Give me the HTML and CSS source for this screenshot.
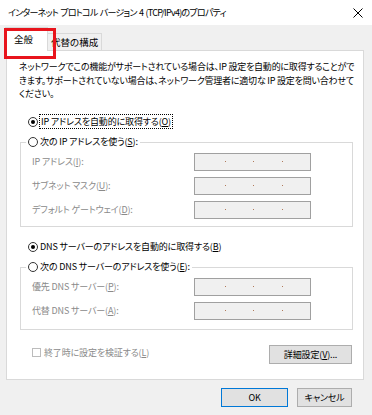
FILE: index.html
```html
<!DOCTYPE html>
<html lang="ja">
<head>
<meta charset="utf-8">
<link rel="stylesheet" href="styles.css">
</head>
<body>
<div class="window">
  <div class="titlebar">
    <span class="title">インターネット プロトコル バージョン 4 (TCP/IPv4)のプロパティ</span>
    <svg class="close" width="10" height="10" viewBox="0 0 10 10"><path d="M0.5 0.5L9.5 9.5M9.5 0.5L0.5 9.5" stroke="#000" stroke-width="1" fill="none"/></svg>
  </div>
  <div class="tabs">
    <div class="tab active">全般</div>
    <div class="tab">代替の構成</div>
  </div>
  <div class="panel">
    <p class="desc">
      <span class="line">ネットワークでこの機能がサポートされている場合は、IP 設定を自動的に取得することがで</span>
      <span class="line">きます。サポートされていない場合は、ネットワーク管理者に適切な IP 設定を問い合わせて</span>
      <span class="line">ください。</span>
    </p>
    <div class="radio-row r-auto-ip"><span class="radio checked"></span><span class="focus">IP アドレスを自動的に取得する(<u>O</u>)</span></div>
    <div class="radio-row legend"><span class="radio"></span><span class="legend-text">次の IP アドレスを使う(<u>S</u>):</span></div>
    <div class="group g-ip">
      <div class="field-row"><span class="lbl">IP アドレス(<u>I</u>):</span><span class="ipbox"><i></i><i></i><i></i></span></div>
      <div class="field-row"><span class="lbl">サブネット マスク(<u>U</u>):</span><span class="ipbox"><i></i><i></i><i></i></span></div>
      <div class="field-row"><span class="lbl">デフォルト ゲートウェイ(<u>D</u>):</span><span class="ipbox"><i></i><i></i><i></i></span></div>
    </div>
    <div class="radio-row r-auto-dns"><span class="radio checked"></span><span>DNS サーバーのアドレスを自動的に取得する(<u>B</u>)</span></div>
    <div class="radio-row legend"><span class="radio"></span><span class="legend-text">次の DNS サーバーのアドレスを使う(<u>E</u>):</span></div>
    <div class="group g-dns">
      <div class="field-row"><span class="lbl">優先 DNS サーバー(<u>P</u>):</span><span class="ipbox"><i></i><i></i><i></i></span></div>
      <div class="field-row"><span class="lbl">代替 DNS サーバー(<u>A</u>):</span><span class="ipbox"><i></i><i></i><i></i></span></div>
    </div>
    <div class="bottom-row">
      <div class="check-row"><span class="checkbox"></span><span>終了時に設定を検証する(<u>L</u>)</span></div>
      <button class="btn detail">詳細設定(<u>V</u>)...</button>
    </div>
  </div>
  <div class="footer">
    <button class="btn ok">OK</button>
    <button class="btn cancel">キャンセル</button>
  </div>
</div>
</body>
</html>
```

FILE: styles.css
```css
* { box-sizing: border-box; }
html, body { margin: 0; padding: 0; }
body {
  width: 372px;
  height: 415px;
  background: #f0f0f0;
  font-family: "Noto Sans CJK JP", "Noto Sans", sans-serif;
  font-size: 9px;
  letter-spacing: -0.15px;
  font-feature-settings: "palt";
  color: #000;
  overflow: hidden;
}
u { text-decoration: underline; text-underline-offset: 1px; }
.window { width: 372px; height: 415px; display: flex; flex-direction: column; }
.titlebar {
  height: 25px;
  background: #fff;
  display: flex;
  align-items: center;
  justify-content: space-between;
  padding: 0 9px 0 8px;
}
.title { font-size: 9px; letter-spacing: -0.75px; word-spacing: 1px; white-space: nowrap; }
.close { display: block; }
.tabs {
  height: 25px;
  display: flex;
  align-items: flex-end;
  padding-left: 5px;
  position: relative;
  z-index: 2;
}
.tab {
  height: 17px;
  padding: 0 3px;
  border: 1px solid #d9d9d9;
  border-bottom: none;
  background: #f0f0f0;
  display: flex;
  align-items: center;
  white-space: nowrap;
  letter-spacing: 0;
  font-size: 9.5px;
}
.tab.active {
  position: relative;
  height: 24px;
  width: 43px;
  margin-bottom: -1px;
  background: #fff;
  padding: 0 0 2px 8px;
}
.tab.active::after {
  content: "";
  position: absolute;
  left: -2px;
  top: 0;
  width: 46px;
  height: 25px;
  border: 3px solid #e8141c;
}
.tab.active + .tab { border-left: none; }
.panel {
  margin: 0 8px 0 6px;
  height: 330px;
  background: #fff;
  border: 1px solid #d9d9d9;
  padding: 9px 0 0 12px;
  position: relative;
  z-index: 1;
}
.desc { margin: 0; line-height: 13.5px; letter-spacing: -0.22px; }
.line { display: block; white-space: nowrap; }
.radio-row {
  display: flex;
  align-items: center;
  height: 14px;
  padding-left: 9px;
  white-space: nowrap;
}
.r-auto-ip { margin-top: 14px; }
.radio {
  width: 10px;
  height: 10px;
  border: 1px solid #333;
  border-radius: 50%;
  background: #fff;
  margin-right: 2px;
  position: relative;
  flex: none;
}
.radio.checked::after {
  content: "";
  position: absolute;
  left: 2px; top: 2px;
  width: 4px; height: 4px;
  border-radius: 50%;
  background: #000;
}
.focus { outline: 1px dotted #000; outline-offset: 0; padding: 0 1px; }
.legend { margin-top: 6px; position: relative; z-index: 1; margin-bottom: -7px; }
.legend-text { background: #fff; padding-right: 2px; }
.legend .radio { box-shadow: 0 0 0 2px #fff; }
.group {
  margin-left: 1px;
  width: 333px;
  border: 1px solid #d9d9d9;
  padding: 10px 0 0 11px;
}
.g-ip { height: 85px; }
.g-dns { height: 63px; }
.field-row {
  display: flex;
  align-items: center;
  justify-content: space-between;
  height: 18px;
  margin-bottom: 6px;
  padding-right: 41px;
  color: #8a8a8a;
  white-space: nowrap;
}
.ipbox {
  width: 117px;
  height: 18px;
  background: #f0f0f0;
  border: 1px solid #a0a0a0;
  display: flex;
  justify-content: space-evenly;
  align-items: center;
  padding: 0 0 0 2px;
  flex: none;
}
.ipbox i {
  width: 1px; height: 1px;
  background: #b07a5a;
  display: block;
}
.r-auto-dns { margin-top: 13px; }
.bottom-row {
  margin-top: 15px;
  display: flex;
  align-items: center;
  justify-content: space-between;
  padding-right: 11px;
}
.check-row {
  display: flex;
  align-items: center;
  color: #8a8a8a;
  padding-left: 13px;
  white-space: nowrap;
  margin-top: -4px;
}
.checkbox {
  width: 9px; height: 9px;
  border: 1px solid #bcbcbc;
  background: #fff;
  margin-right: 3px;
}
.btn {
  font-family: inherit;
  font-size: 9px;
  letter-spacing: -0.15px;
  font-feature-settings: "palt";
  height: 19px;
  background: #e1e1e1;
  border: 1px solid #adadad;
  padding: 0;
  color: #000;
  display: flex;
  align-items: center;
  justify-content: center;
}
.detail { width: 83px; }
.footer {
  display: flex;
  justify-content: flex-end;
  gap: 9px;
  padding: 8px 20px 0 0;
}
.ok { width: 67px; border-color: #0078d7; }
.cancel { width: 55px; }
```
